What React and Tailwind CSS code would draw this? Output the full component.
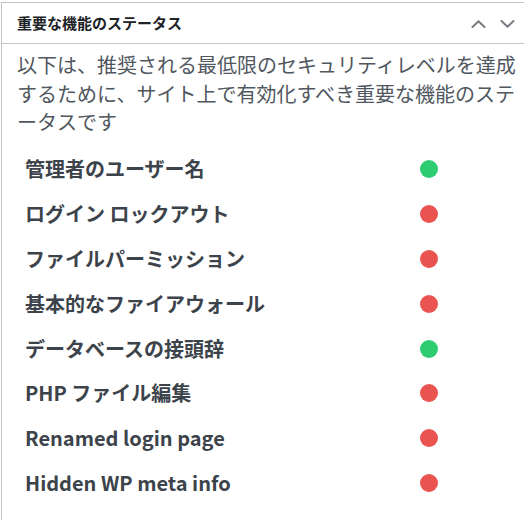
import React from 'react';

const features = [
  { label: '管理者のユーザー名', ok: true },
  { label: 'ログイン ロックアウト', ok: false },
  { label: 'ファイルパーミッション', ok: false },
  { label: '基本的なファイアウォール', ok: false },
  { label: 'データベースの接頭辞', ok: true },
  { label: 'PHP ファイル編集', ok: false },
  { label: 'Renamed login page', ok: false },
  { label: 'Hidden WP meta info', ok: false },
];

const Chevron = ({ up }) => (
  <svg width="15" height="8" viewBox="0 0 15 8" fill="none" stroke="#787c82" strokeWidth="2" strokeLinecap="round" strokeLinejoin="round">
    {up ? <path d="M1.5 7 L7.5 1.2 L13.5 7" /> : <path d="M1.5 1 L7.5 6.8 L13.5 1" />}
  </svg>
);

export default function App() {
  return (
    <div className="w-[524px] h-[520px] bg-white overflow-hidden pt-[2px] pl-[1px] font-['Noto_Sans_CJK_JP','Noto_Sans',sans-serif]">
      <div className="w-[523px] h-[600px] bg-white border-l border-t border-[#c3c4c7]">
        {/* header */}
        <div className="h-[41px] flex items-center border-b border-[#c3c4c7] pl-[15px] pr-[9px]">
          <h2 className="text-[15px] font-bold text-[#1d2327]">重要な機能のステータス</h2>
          <div className="ml-auto flex items-center gap-[14px] mt-[1px]">
            <Chevron up />
            <Chevron />
          </div>
        </div>

        {/* body */}
        <div className="pt-[7px] pl-[15px] pr-[2px]">
          <p className="text-[20px] leading-[28.5px] text-[#50575e]">
            以下は、推奨される最低限のセキュリティレベルを達成するために、サイト上で有効化すべき重要な機能のステータスです
          </p>

          <ul className="mt-[10px] pl-[8px]">
            {features.map((f) => (
              <li key={f.label} className="h-[44.9px] grid grid-cols-[395px_18px] items-center">
                <span className="text-[20px] font-bold text-[#3c434a]">{f.label}</span>
                <span className={`w-[18px] h-[18px] rounded-full ${f.ok ? 'bg-[#2ecc71]' : 'bg-[#ea5450]'}`} />
              </li>
            ))}
          </ul>
        </div>
      </div>
    </div>
  );
}
